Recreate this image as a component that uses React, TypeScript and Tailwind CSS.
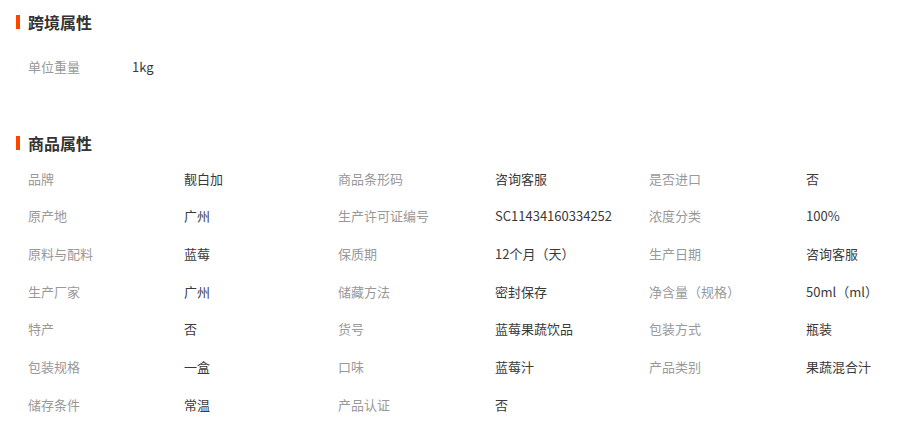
import React from "react";

const rows: [string, string][][] = [
  [["品牌", "靓白加"], ["商品条形码", "咨询客服"], ["是否进口", "否"]],
  [["原产地", "广州"], ["生产许可证编号", "SC11434160334252"], ["浓度分类", "100%"]],
  [["原料与配料", "蓝莓"], ["保质期", "12个月（天）"], ["生产日期", "咨询客服"]],
  [["生产厂家", "广州"], ["储藏方法", "密封保存"], ["净含量（规格）", "50ml（ml）"]],
  [["特产", "否"], ["货号", "蓝莓果蔬饮品"], ["包装方式", "瓶装"]],
  [["包装规格", "一盒"], ["口味", "蓝莓汁"], ["产品类别", "果蔬混合汁"]],
  [["储存条件", "常温"], ["产品认证", "否"]],
];

function Heading({ title }: { title: string }) {
  return (
    <div className="flex h-[22px] items-center">
      <div className="h-[14px] w-[4px] bg-[#ff4400]" />
      <div className="ml-[8px] text-[16px] font-bold leading-[22px] text-[#333]">{title}</div>
    </div>
  );
}

export default function App() {
  return (
    <div
      className="h-[428px] w-[920px] overflow-hidden bg-white pl-[16px] pt-[11px]"
      style={{ fontFamily: '"Noto Sans CJK SC", "Liberation Sans", sans-serif' }}
    >
      <Heading title="跨境属性" />
      <div className="mt-[24px] flex pl-[12px] text-[13px] leading-[20px]">
        <div className="w-[104px] text-[#999]">单位重量</div>
        <div className="text-[#3a3a3a]">1kg</div>
      </div>
      <div className="mt-[55px]">
        <Heading title="商品属性" />
      </div>
      <div className="mt-[6px] pl-[12px]">
        {rows.map((r, i) => (
          <div key={i} className="grid h-[37.67px] grid-cols-[156px_154px_157px_154px_157px_1fr] items-center text-[13px] leading-[20px]">
            {r.map(([k, v], j) => (
              <React.Fragment key={j}>
                <div className="whitespace-nowrap text-[#999]">{k}</div>
                <div className="whitespace-nowrap text-[#3a3a3a]">{v}</div>
              </React.Fragment>
            ))}
          </div>
        ))}
      </div>
    </div>
  );
}
